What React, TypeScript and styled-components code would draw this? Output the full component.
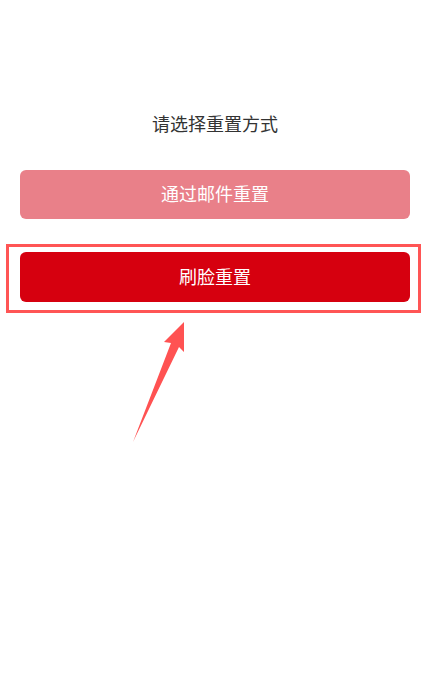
import React from 'react'
import styled, { createGlobalStyle } from 'styled-components'

const GlobalStyle = createGlobalStyle`
  html, body {
    margin: 0;
    padding: 0;
    background: #fff;
  }
  body {
    font-family: "Noto Sans CJK SC", "Noto Sans", sans-serif;
  }
`

// 페이지 전체
const Page = styled.div`
  width: 428px;
  min-height: 675px;
  box-sizing: border-box;
  padding: 110px 18px 0 20px;
`

const Title = styled.div`
  font-size: 18px;
  line-height: 26px;
  color: #333;
  text-align: center;
  margin-bottom: 34px;
`

const ResetButton = styled.button<{ $primary?: boolean }>`
  display: flex;
  align-items: center;
  justify-content: center;
  width: 390px;
  height: ${(p) => (p.$primary ? '50px' : '49px')};
  border: none;
  border-radius: 6px;
  padding: 0 0 3px;
  background: ${(p) => (p.$primary ? '#d6000f' : '#e98089')};
  color: #fff;
  font-family: inherit;
  font-size: 18px;
`

// 강조 표시 박스
const Highlight = styled.div`
  margin: 25px 0 0 -14px;
  width: 415px;
  box-sizing: border-box;
  border: 3px solid #ff5555;
  padding: 5px 8px 8px 11px;
`

const ArrowMark = styled.svg`
  display: block;
  margin: 8px 0 0 113px;
`

export default function App() {
  return (
    <>
      <GlobalStyle />
      <Page>
        <Title>请选择重置方式</Title>
        <ResetButton>通过邮件重置</ResetButton>
        <Highlight>
          <ResetButton $primary>刷脸重置</ResetButton>
        </Highlight>
        <ArrowMark width="52" height="122" viewBox="0 0 52 122">
          <polygon points="51,1 31,21 38,22 0,121 46,26 51,31" fill="#ff5252" />
        </ArrowMark>
      </Page>
    </>
  )
}
